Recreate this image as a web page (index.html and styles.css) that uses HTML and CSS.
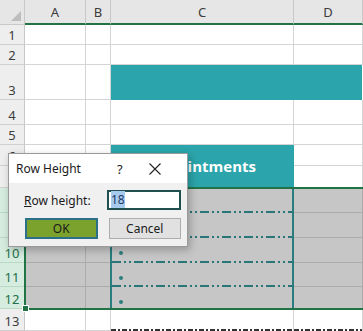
FILE: index.html
```html
<!DOCTYPE html>
<html lang="en">

<head>
    <meta charset="UTF-8">
    <title>Row Height</title>
    <link rel="stylesheet" href="styles.css">
</head>

<body>
    <div class="sheet">
        <!-- column headers -->
        <div class="corner">
            <svg width="25" height="25" viewBox="0 0 25 25"><polygon points="11,21 21,21 21,11" fill="#bdbdbd"/></svg>
        </div>
        <div class="col-head">A</div>
        <div class="col-head">B</div>
        <div class="col-head">C</div>
        <div class="col-head">D</div>

        <div class="rh">1</div><div class="c"></div><div class="c"></div><div class="c"></div><div class="c"></div>
        <div class="rh">2</div><div class="c"></div><div class="c"></div><div class="c"></div><div class="c"></div>
        <div class="rh">3</div><div class="c"></div><div class="c"></div><div class="banner wide"></div>
        <div class="rh">4</div><div class="c"></div><div class="c"></div><div class="c"></div><div class="c"></div>
        <div class="rh">5</div><div class="c"></div><div class="c"></div><div class="c"></div><div class="c"></div>
        <div class="rh">6</div><div class="c"></div><div class="c"></div><div class="banner tall">Appointments</div><div class="c"></div>
        <div class="rh">7</div><div class="c"></div><div class="c"></div><div class="c"></div>

        <!-- selected rows 8-12 -->
        <div class="rh on">8</div><div class="c sel"></div><div class="c sel"></div><div class="cc dash"><span class="dot"></span></div><div class="c sel"></div>
        <div class="rh on">9</div><div class="c sel"></div><div class="c sel"></div><div class="cc dash"><span class="dot"></span></div><div class="c sel"></div>
        <div class="rh on">10</div><div class="c sel"></div><div class="c sel"></div><div class="cc dash"><span class="dot"></span></div><div class="c sel"></div>
        <div class="rh on">11</div><div class="c sel"></div><div class="c sel"></div><div class="cc dash"><span class="dot"></span></div><div class="c sel"></div>
        <div class="rh on">12</div><div class="c sel"></div><div class="c sel"></div><div class="cc"><span class="dot"></span></div><div class="c sel"></div>

        <div class="rh">13</div><div class="c"></div><div class="c"></div><div class="c dark"></div><div class="c dark"></div>

        <div class="selection"><span class="handle"></span></div>
    </div>

    <div class="dialog">
        <div class="dialog-title">
            <span class="title-text">Row Height</span>
            <span class="help">?</span>
            <span class="close">
                <svg width="12" height="12" viewBox="0 0 12 12"><path d="M0.5 0.5 L11.5 11.5 M11.5 0.5 L0.5 11.5" stroke="#222" stroke-width="1.1" fill="none"/></svg>
            </span>
        </div>
        <div class="dialog-body">
            <div class="field">
                <label for="rowHeight"><u>R</u>ow height:</label>
                <div class="input" id="rowHeight"><span class="picked">18</span></div>
            </div>
            <div class="buttons">
                <button class="ok">OK</button>
                <button class="cancel">Cancel</button>
            </div>
        </div>
    </div>
</body>

</html>
```

FILE: styles.css
```css
body {
    margin: 0;
    width: 363px;
    height: 331px;
    overflow: hidden;
    background-color: #fff;
    font-family: "Noto Sans", "Open Sans", sans-serif;
    position: relative;
}

.sheet {
    display: grid;
    grid-template-columns: 25px 61px 25px 183px 69px;
    grid-template-rows: 25px 20px 20px 35px 25px 20px 21px 22px 25px 25px 25px 24px 22px 22px;
    position: relative;
}

.corner {
    background-color: #e6e6e6;
    border-right: 1px solid #c8c8c8;
    border-bottom: 1px solid #c8c8c8;
    box-sizing: border-box;
}

.corner svg {
    display: block;
}

.col-head {
    background-color: #e6e6e6;
    border-right: 1px solid #c8c8c8;
    border-bottom: 2px solid #217346;
    box-sizing: border-box;
    color: #3c3c3c;
    font-size: 13px;
    display: flex;
    align-items: center;
    justify-content: center;
}

.rh {
    background-color: #eeeeee;
    border-right: 1px solid #c8c8c8;
    border-bottom: 1px solid #d0d0d0;
    box-sizing: border-box;
    color: #3c3c3c;
    font-size: 13px;
    line-height: 17px;
    display: flex;
    align-items: flex-end;
    justify-content: center;
}

.rh.on {
    background-color: #d5ecdf;
    color: #24704a;
    border-bottom-color: #b9d9c6;
}

.c {
    border-right: 1px solid #d4d4d4;
    border-bottom: 1px solid #d4d4d4;
    box-sizing: border-box;
}

.c.sel {
    background-color: #c6c6c6;
    border-color: #ababab;
}

/* teal blocks */
.banner {
    background-color: #2ba5ab;
    color: #fff;
    font-family: "Open Sans", sans-serif;
    font-weight: bold;
    font-size: 15px;
    display: flex;
    align-items: center;
    justify-content: center;
}

.banner.wide {
    grid-column: span 2;
    margin-right: 1px;
}

.banner.tall {
    grid-row: span 2;
    margin-bottom: 1px;
}

/* column C inside the selection */
.cc {
    background-color: #c6c6c6;
    border-left: 2px solid #2a7c7e;
    border-right: 2px solid #2a7c7e;
    margin-left: -1px;
    position: relative;
}

.cc.dash {
    background: repeating-linear-gradient(90deg, #287677 0 9px, transparent 9px 12px, #287677 12px 14px, transparent 14px 17px, #287677 17px 19px, transparent 19px 22px) left bottom / 100% 2px no-repeat, #c6c6c6;
}

.dot {
    position: absolute;
    left: 7px;
    top: 13px;
    width: 4px;
    height: 4px;
    border-radius: 50%;
    background-color: #2e7f80;
}

.c.dark {
    border-bottom: none;
    background: repeating-linear-gradient(90deg, #333 0 5px, transparent 5px 7px, #333 7px 9px, transparent 9px 11px) left bottom / 100% 2px no-repeat;
}

/* selection outline */
.selection {
    position: absolute;
    left: 24px;
    top: 187px;
    width: 345px;
    height: 123px;
    border: 2px solid #217346;
    box-sizing: border-box;
}

.handle {
    position: absolute;
    left: -4px;
    bottom: -4px;
    width: 5px;
    height: 5px;
    background-color: #217346;
    border: 1px solid #fff;
}

/* Row Height dialog */
.dialog {
    position: absolute;
    left: 8px;
    top: 153px;
    width: 180px;
    height: 94px;
    border: 1px solid #9a9a9a;
    box-sizing: border-box;
    box-shadow: 2px 3px 8px rgba(0, 0, 0, 0.25);
    font-size: 12px;
    color: #1a1a1a;
    display: flex;
    flex-direction: column;
}

.dialog-title {
    height: 29px;
    background-color: #fff;
    display: flex;
    align-items: center;
    padding-left: 7px;
}

.title-text {
    width: 101px;
}

.help {
    width: 32px;
    font-size: 13px;
}

.close svg {
    display: block;
}

.dialog-body {
    flex: 1;
    background-color: #f0f0f0;
    padding: 7px 6px 0 15px;
}

.field {
    display: flex;
    align-items: center;
    height: 20px;
}

.field label {
    flex: 1;
}

.input {
    width: 74px;
    height: 20px;
    border: 2px solid #1f4f4f;
    background-color: #fff;
    box-sizing: border-box;
    font-size: 12px;
    line-height: 16px;
    padding-left: 2px;
}

.picked {
    background-color: #a7cbee;
    color: #1f3a66;
}

.buttons {
    display: flex;
    margin-top: 8px;
    margin-left: 1px;
    gap: 11px;
}

button {
    width: 73px;
    height: 21px;
    font-family: inherit;
    font-size: 12px;
    color: #1a1a1a;
    padding: 0;
    box-sizing: border-box;
}

.ok {
    background-color: #7ba22d;
    border: 2px solid #2b6f89;
}

.cancel {
    background-color: #e1e1e1;
    border: 1px solid #adadad;
}
```
